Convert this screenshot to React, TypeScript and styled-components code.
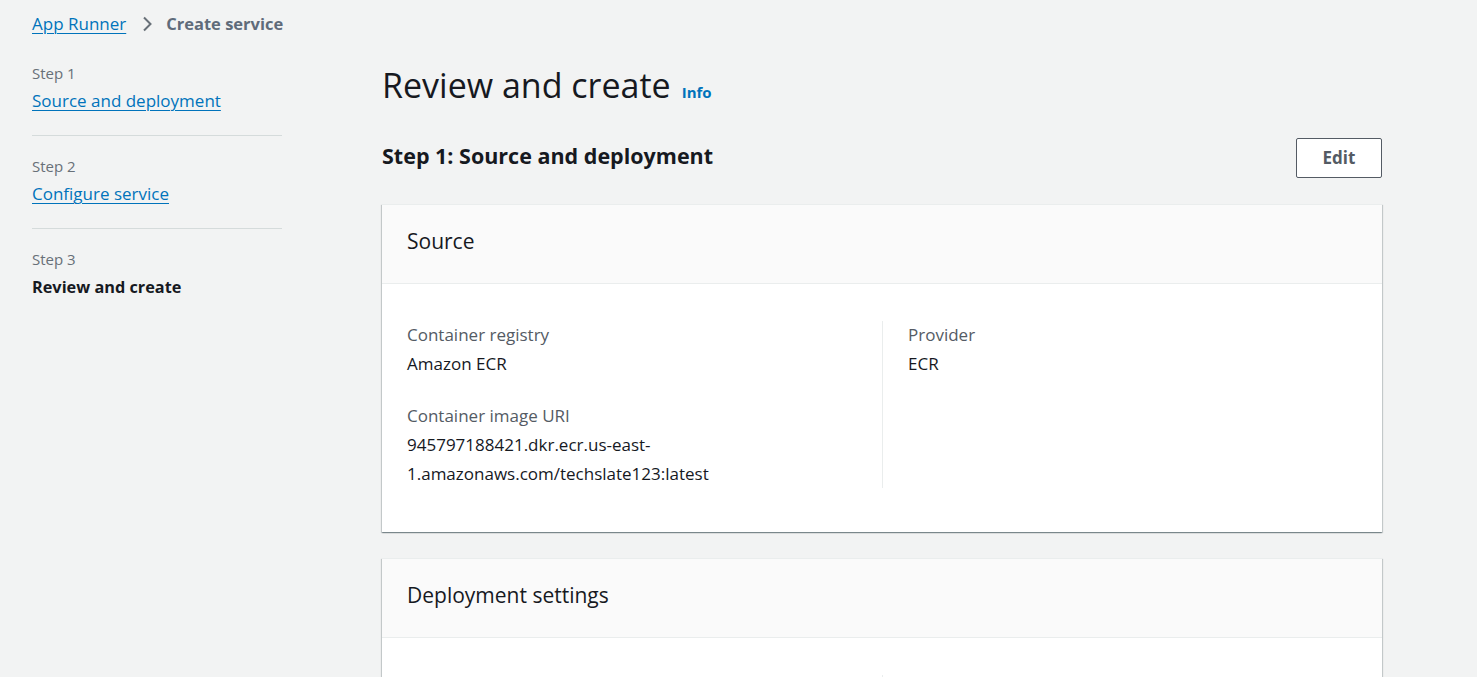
import React from "react";
import styled, { createGlobalStyle } from "styled-components";

const Global = createGlobalStyle`
  html, body { margin: 0; padding: 0; background: #f2f3f3; }
  body { font-family: "Open Sans", "Noto Sans", Arial, sans-serif; color: #16191f; }
  * { box-sizing: border-box; }
`;

const Page = styled.div`
  padding: 12px 0 40px 32px;
  min-height: 677px;
`;

const Breadcrumbs = styled.nav`
  display: flex;
  align-items: center;
  height: 24px;
  font-size: 17px;
  line-height: 24px;
`;

const Link = styled.a`
  color: #0073bb;
  text-decoration: underline;
  text-underline-offset: 3px;
  text-decoration-thickness: 1px;
  cursor: pointer;
`;

const Chevron = styled.span`
  display: inline-flex;
  margin: 0 11px 0 13px;
  color: #687078;
`;

const Current = styled.span`
  font-size: 16.5px;
  font-weight: 700;
  color: #5f6b7a;
`;

const Layout = styled.div`
  display: grid;
  grid-template-columns: 250px 1000px;
  column-gap: 100px;
  margin-top: 27px;
`;

const Steps = styled.ol`
  list-style: none;
  margin: 0;
  padding: 0;
`;

const StepItem = styled.li<{ $last?: boolean }>`
  padding: 20px 0 22px;
  border-bottom: ${(p) => (p.$last ? "none" : "1px solid #d5dbdb")};
  &:first-child { padding-top: 0; }
`;

const StepLabel = styled.div`
  font-size: 15px;
  line-height: 20px;
  color: #687078;
  margin-bottom: 6px;
`;

const StepLink = styled(Link)`
  font-size: 17px;
  line-height: 24px;
`;

const StepCurrent = styled.div`
  font-size: 16.3px;
  line-height: 24px;
  font-weight: 700;
  color: #16191f;
  margin-top: 1px;
`;

const Main = styled.main`
  margin-top: 2px;
`;

const TitleRow = styled.div`
  display: flex;
  align-items: baseline;
  gap: 11px;
`;

const Title = styled.h1`
  margin: 0;
  font-size: 34px;
  line-height: 40px;
  font-weight: 400;
  color: #16191f;
`;

const InfoLink = styled.a`
  font-size: 15px;
  font-weight: 700;
  color: #0073bb;
  cursor: pointer;
`;

const SectionHeader = styled.div`
  display: flex;
  align-items: center;
  justify-content: space-between;
  margin-top: 33px;
  margin-bottom: 26px;
`;

const SectionTitle = styled.h2`
  margin: 0;
  font-size: 21.5px;
  line-height: 28px;
  font-weight: 700;
  color: #16191f;
  margin-top: -4px;
`;

const Button = styled.button`
  height: 40px;
  width: 86px;
  background: #ffffff;
  border: 1px solid #545b64;
  border-radius: 2px;
  font-family: inherit;
  font-size: 17px;
  font-weight: 700;
  color: #545b64;
  cursor: pointer;
  padding: 0 0 2px;
`;

const Card = styled.section`
  background: #ffffff;
  border-top: 1px solid #eaeded;
  box-shadow: 0 1px 1px 0 rgba(0, 28, 36, 0.3), 1px 1px 1px 0 rgba(0, 28, 36, 0.15),
    -1px 1px 1px 0 rgba(0, 28, 36, 0.15);
  margin-bottom: 26px;
`;

const CardHeader = styled.header`
  background: #fafafa;
  border-bottom: 1px solid #eaeded;
  padding: 22px 25px 28px;
`;

const CardTitle = styled.h3`
  margin: 0;
  font-size: 21px;
  line-height: 28px;
  font-weight: 400;
  color: #16191f;
`;

const CardBody = styled.div`
  padding: 37px 25px 44px;
  display: grid;
  grid-template-columns: 1fr 1fr;
`;

const Column = styled.div<{ $divider?: boolean }>`
  padding-top: 3px;
  padding-left: ${(p) => (p.$divider ? "25px" : "0")};
  border-left: ${(p) => (p.$divider ? "1px solid #eaeded" : "none")};
  display: flex;
  flex-direction: column;
  gap: 27px;
`;

const Field = styled.div`
  display: flex;
  flex-direction: column;
  gap: 3px;
`;

const Label = styled.div`
  font-size: 17px;
  line-height: 22px;
  color: #545b64;
`;

const Value = styled.div`
  font-size: 17px;
  line-height: 29px;
  color: #16191f;
`;

const ChevronIcon = () => (
  <svg width="16" height="16" viewBox="0 0 16 16" fill="none">
    <path d="M5 1.5l6.5 6.5L5 14.5" stroke="currentColor" strokeWidth="2" strokeLinejoin="miter" />
  </svg>
);

export default function App() {
  return (
    <>
      <Global />
      <Page>
        <Breadcrumbs>
          <Link>App Runner</Link>
          <Chevron>
            <ChevronIcon />
          </Chevron>
          <Current>Create service</Current>
        </Breadcrumbs>
        <Layout>
          <Steps>
            <StepItem>
              <StepLabel>Step 1</StepLabel>
              <StepLink>Source and deployment</StepLink>
            </StepItem>
            <StepItem>
              <StepLabel>Step 2</StepLabel>
              <StepLink>Configure service</StepLink>
            </StepItem>
            <StepItem $last>
              <StepLabel>Step 3</StepLabel>
              <StepCurrent>Review and create</StepCurrent>
            </StepItem>
          </Steps>
          <Main>
            <TitleRow>
              <Title>Review and create</Title>
              <InfoLink>Info</InfoLink>
            </TitleRow>
            <SectionHeader>
              <SectionTitle>Step 1: Source and deployment</SectionTitle>
              <Button>Edit</Button>
            </SectionHeader>
            <Card>
              <CardHeader>
                <CardTitle>Source</CardTitle>
              </CardHeader>
              <CardBody>
                <Column>
                  <Field>
                    <Label>Container registry</Label>
                    <Value>Amazon ECR</Value>
                  </Field>
                  <Field>
                    <Label>Container image URI</Label>
                    <Value>
                      945797188421.dkr.ecr.us-east-
                      <br />
                      1.amazonaws.com/techslate123:latest
                    </Value>
                  </Field>
                </Column>
                <Column $divider>
                  <Field>
                    <Label>Provider</Label>
                    <Value>ECR</Value>
                  </Field>
                </Column>
              </CardBody>
            </Card>
            <Card>
              <CardHeader>
                <CardTitle>Deployment settings</CardTitle>
              </CardHeader>
              <CardBody>
                <Column>
                  <Field>
                    <Label>Deployment trigger</Label>
                    <Value>Manual</Value>
                  </Field>
                </Column>
                <Column $divider>
                  <Field>
                    <Label>ECR access role</Label>
                    <Value>AppRunnerECRAccessRole</Value>
                  </Field>
                </Column>
              </CardBody>
            </Card>
          </Main>
        </Layout>
      </Page>
    </>
  );
}
